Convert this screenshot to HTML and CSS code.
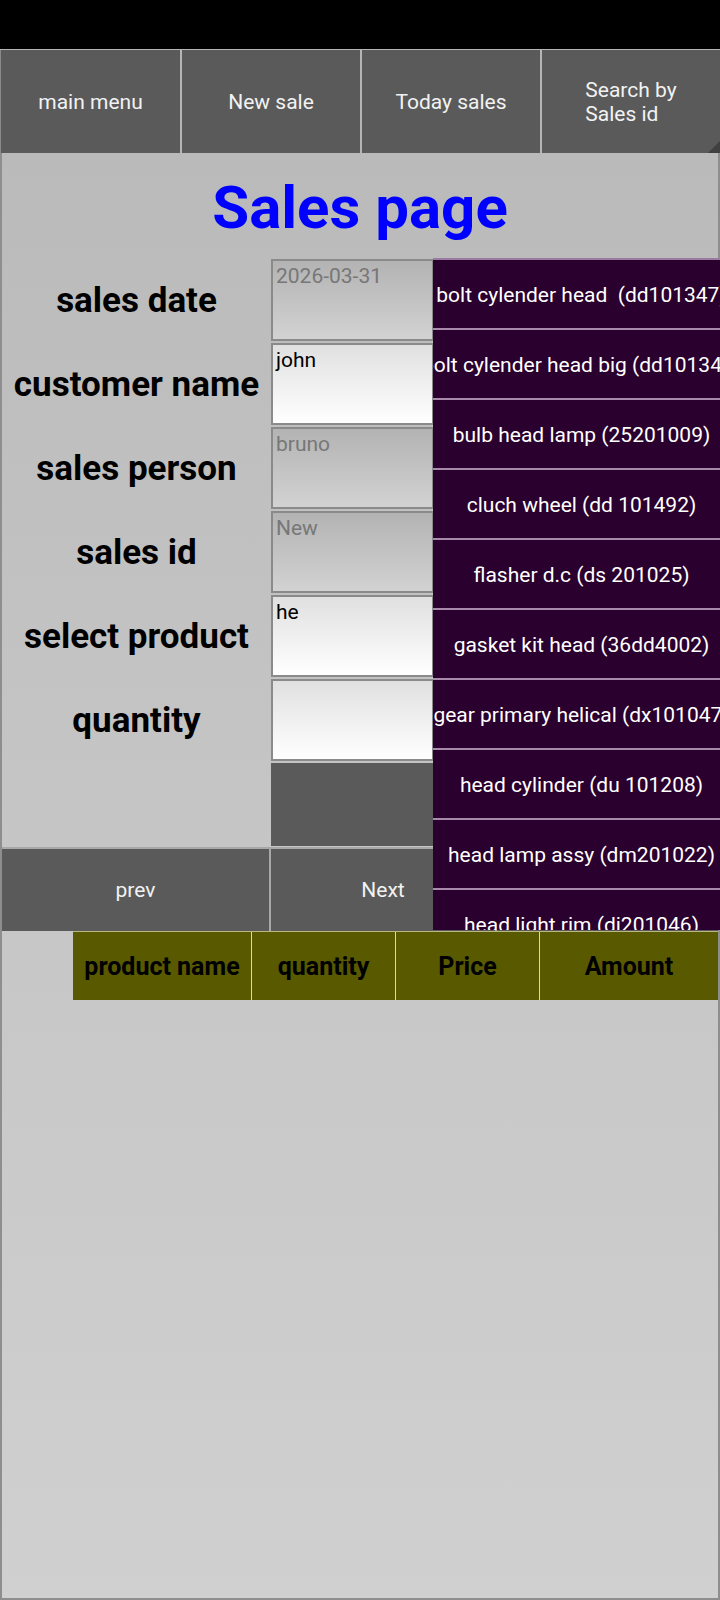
FILE: index.html
```html
<!DOCTYPE html>
<html>
<head>
<meta charset="utf-8">
<link rel="stylesheet" href="styles.css">
</head>
<body>
<div class="status"></div>
<div class="nav">
  <div class="nav-btn">main menu</div>
  <div class="nav-btn">New sale</div>
  <div class="nav-btn">Today sales</div>
  <div class="nav-btn"><span class="two">Search by<br>Sales id</span><span class="grip"></span></div>
</div>
<div class="page">
  <h1 class="title">Sales page</h1>
  <div class="form">
    <div class="labels">
      <div class="label">sales date</div>
      <div class="label">customer name</div>
      <div class="label">sales person</div>
      <div class="label">sales id</div>
      <div class="label">select product</div>
      <div class="label">quantity</div>
    </div>
    <div class="inputs">
      <div class="field disabled">2026-03-31</div>
      <div class="field">john</div>
      <div class="field disabled">bruno</div>
      <div class="field disabled">New</div>
      <div class="field">he</div>
      <div class="field"></div>
      <div class="blank-btn"></div>
    </div>
    <div class="dropdown">
      <div class="item">bolt cylender head  (dd101347)</div>
      <div class="item">bolt cylender head big (dd101348)</div>
      <div class="item">bulb head lamp (25201009)</div>
      <div class="item">cluch wheel (dd 101492)</div>
      <div class="item">flasher d.c (ds 201025)</div>
      <div class="item">gasket kit head (36dd4002)</div>
      <div class="item">gear primary helical (dx101047)</div>
      <div class="item">head cylinder (du 101208)</div>
      <div class="item">head lamp assy (dm201022)</div>
      <div class="item">head light rim (di201046)</div>
    </div>
  </div>
  <div class="pager">
    <div class="pbtn">prev</div>
    <div class="pbtn">Next</div>
    <div class="pbtn"></div>
  </div>
  <div class="thead">
    <div class="th">product name</div>
    <div class="th">quantity</div>
    <div class="th">Price</div>
    <div class="th">Amount</div>
  </div>
</div>
</body>
</html>
```
FILE: styles.css
```css
* { box-sizing: border-box; }
html, body { margin: 0; padding: 0; }
body {
  width: 720px;
  height: 1600px;
  background: #000;
  font-family: Roboto, "Liberation Sans", sans-serif;
  overflow: hidden;
}
.status { height: 49px; background: #000; }
.nav {
  height: 104px;
  display: grid;
  grid-template-columns: 180px 180px 180px 180px;
  background: #b5b5b5;
  border-top: 1px solid #b5b5b5;
}
.nav-btn {
  position: relative;
  background: #5a5a5a;
  color: #f2f2f2;
  font-size: 21px;
  display: flex;
  align-items: center;
  justify-content: center;
  margin-left: 2px;
}
.nav-btn:first-child { margin-left: 0; border-left: 1px solid #8a8a8a; }
.two { line-height: 24px; }
.grip {
  position: absolute;
  right: 0;
  bottom: 0;
  width: 0;
  height: 0;
  border-left: 12px solid transparent;
  border-bottom: 12px solid #404040;
}
.page {
  height: 1447px;
  background: linear-gradient(#bababa, #c4c4c4 40%, #d0d0d0);
  border-left: 2px solid #8e8e8e;
  border-right: 2px solid #8e8e8e;
  border-bottom: 2px solid #8e8e8e;
}
.title {
  margin: 0;
  height: 105px;
  display: flex;
  align-items: center;
  justify-content: center;
  color: #0000ff;
  font-size: 60px;
  font-weight: 700;
  padding-top: 4px;
}
.form {
  position: relative;
  display: flex;
  height: 589px;
}
.labels { width: 269px; }
.label {
  height: 84px;
  display: flex;
  align-items: center;
  justify-content: center;
  font-size: 35px;
  font-weight: 700;
  color: #000;
  white-space: nowrap;
}
.inputs { width: 163px; padding-top: 1px; }
.field {
  height: 82px;
  margin-bottom: 2px;
  border: 2px solid #8a8a8a;
  background: linear-gradient(#e0e0e0, #ffffff);
  font-size: 21px;
  line-height: 24px;
  padding: 3px 3px;
  color: #000;
}
.field.disabled {
  background: linear-gradient(#b3b3b3, #d2d2d2);
  color: #777;
}
.blank-btn {
  height: 83px;
  background: #5a5a5a;
}
.dropdown {
  position: absolute;
  left: 431px;
  right: -2px;
  top: 0;
  height: 672px;
  overflow: hidden;
  background: #2a002e;
  border-top: 2px solid #9a7aa0;
}
.item {
  height: 70px;
  display: flex;
  align-items: center;
  justify-content: center;
  color: #ffffff;
  font-size: 21px;
  white-space: pre;
  border-bottom: 2px solid #a88aac;
  padding-top: 2px;
  padding-left: 10px;
}
.pager {
  display: grid;
  grid-template-columns: 267px 224px 1fr;
  gap: 2px;
  height: 84px;
  border-top: 2px solid #a8a8a8;
  background: #a8a8a8;
}
.pbtn {
  background: #5a5a5a;
  color: #f2f2f2;
  font-size: 21px;
  display: flex;
  align-items: center;
  justify-content: center;
}
.thead {
  margin-left: 71px;
  height: 69px;
  display: grid;
  grid-template-columns: 178px 143px 143px 1fr;
  gap: 1px;
  background: #d8d8c8;
  border-top: 1px solid #b8b880;
}
.th {
  background: #595900;
  color: #000;
  font-weight: 700;
  font-size: 25px;
  display: flex;
  align-items: center;
  justify-content: center;
  white-space: nowrap;
}
```
